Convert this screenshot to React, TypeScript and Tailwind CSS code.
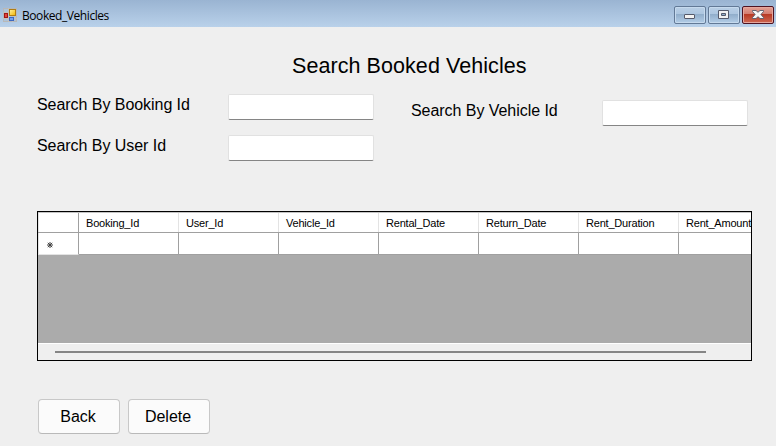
const columns = [
  'Booking_Id',
  'User_Id',
  'Vehicle_Id',
  'Rental_Date',
  'Return_Date',
  'Rent_Duration',
  'Rent_Amount',
];

function FormIcon() {
  return (
    <svg width="14" height="14" viewBox="0 0 14 14" shapeRendering="crispEdges">
      <defs>
        <linearGradient id="gold" x1="0" y1="0" x2="1" y2="1">
          <stop offset="0" stopColor="#fff3a0" />
          <stop offset="1" stopColor="#f0b400" />
        </linearGradient>
      </defs>
      <path d="M0.5 0.5h13v13H0.5z" fill="#aec3d8" stroke="#b8b8b8" />
      <path d="M5.500 0v14M9.500 8v6M0 4.500h5M0 10.500h14" stroke="#c4c0ba" fill="none" />
      <rect x="6.5" y="1.5" width="6" height="6" fill="url(#gold)" stroke="#b07d10" />
      <rect x="1.5" y="5.5" width="3" height="4" fill="#e0443a" stroke="#a01515" />
      <rect x="6.5" y="9.5" width="4" height="3" fill="#6ea0f0" stroke="#3d68c0" />
    </svg>
  );
}

function CaptionButton({ kind }: { kind: 'minimize' | 'maximize' | 'close' }) {
  const tone =
    kind === 'close'
      ? 'border-[#4e1322] bg-[linear-gradient(#e3a297_0%,#d37c70_44%,#b83a25_46%,#cf6852_100%)] shadow-[inset_0_0_0_1px_#e6a79d]'
      : 'border-[#627996] bg-[linear-gradient(#b9cfe6_0%,#adc6e0_44%,#91aecb_46%,#b3cde7_100%)] shadow-[inset_0_0_0_1px_#c6daee]';
  return (
    <button className={`flex h-[18px] w-8 items-center justify-center rounded-xs border ${tone}`}>
      <svg width="30" height="16" viewBox="0 0 30 16">
        {kind === 'minimize' && (
          <rect x="9.5" y="7.5" width="10" height="4" rx="0.5" fill="#f3f3f3" stroke="#555a6b" />
        )}
        {kind === 'maximize' && (
          <path d="M9.5 3.5h10v8h-10zM12.500 6.500v2h4v-2z" fillRule="evenodd" fill="#f3f3f3" stroke="#555a6b" />
        )}
        {kind === 'close' && (
          <path
            d="M9.500 3.500h3.500l2 1.800 2-1.800h3.500v1L17.900 7.500l2.600 3v1h-3.500l-2-1.800-2 1.800H9.500v-1l2.600-3L9.500 4.500z"
            fill="#f6f6f6"
            stroke="#555a6b"
            strokeWidth="0.9"
          />
        )}
      </svg>
    </button>
  );
}

function Field() {
  return (
    <input
      type="text"
      className="h-[26px] w-[146px] rounded-xs border border-[#e1e1e1] border-b-[#858585] bg-white px-1 outline-none"
    />
  );
}

function ActionButton({ label }: { label: string }) {
  return (
    <button className="h-[35px] w-[82px] rounded border border-[#c8c8c8] border-b-[#b9b9b9] bg-[#fbfbfb] pr-0.5 text-base">
      {label}
    </button>
  );
}

export default function App() {
  return (
    <div className="flex h-[446px] w-[776px] flex-col overflow-hidden bg-[#efefef] font-['Liberation_Sans',Arial,sans-serif] text-base text-black">
      <header className="flex h-[27px] shrink-0 items-start bg-linear-to-b from-[#9ab4d2] to-[#b9d1ea] pr-0.5 pl-[3px]">
        <div className="pt-2">
          <FormIcon />
        </div>
        <span className="ml-[5px] pt-2 font-['Open_Sans','Noto_Sans',sans-serif] text-[12px] leading-4 tracking-[-0.43px] whitespace-nowrap">
          Booked_Vehicles
        </span>
        <div className="ml-auto flex gap-0.5 pt-1.5">
          <CaptionButton kind="minimize" />
          <CaptionButton kind="maximize" />
          <CaptionButton kind="close" />
        </div>
      </header>

      <main className="flex flex-col pr-6 pl-[37px]">
        <h1 className="mt-[27px] h-6 pl-[255px] text-[21.5px] leading-6 tracking-[0.07px] whitespace-nowrap">
          Search Booked Vehicles
        </h1>

        <section className="mt-4 flex h-[67px] tracking-[-0.05px]">
          <div className="grid w-[374px] grid-cols-[191px_146px] grid-rows-[26px_26px] content-start gap-y-[15px]">
            <label className="leading-[22px]">Search By Booking Id</label>
            <Field />
            <label className="leading-[22px]">Search By User Id</label>
            <Field />
          </div>
          <div className="flex items-start pt-1.5">
            <label className="w-[191px] leading-[22px]">Search By Vehicle Id</label>
            <Field />
          </div>
        </section>

        <section className="mt-[50px] flex h-[150px] w-[715px] flex-col overflow-hidden border border-black bg-[#ababab]">
          <div className="flex h-[21px] w-[741px] shrink-0 border-t border-b border-t-[#c4c4c4] border-b-[#a0a0a0] bg-white text-[11px] leading-5">
            <div className="w-[41px] border-r border-l border-r-[#a0a0a0] border-l-[#e3e3e3]" />
            {columns.map((name) => (
              <div key={name} className="w-[100px] border-r border-[#e3e3e3] pl-[7px] tracking-[-0.2px]">
                {name}
              </div>
            ))}
          </div>
          <div className="flex h-[22px] w-[741px] shrink-0 bg-white">
            <div className="flex w-[41px] items-center border-r border-b border-l border-r-[#a0a0a0] border-b-[#e3e3e3] border-l-[#e3e3e3] pt-0.5 pl-[7px]">
              <svg width="8" height="8" viewBox="0 0 8 8">
                <path d="M4 1v6M1 4h6M1.800 1.800l4.400 4.400M6.200 1.800L1.800 6.200" stroke="#404040" strokeWidth="1" />
              </svg>
            </div>
            {columns.map((name) => (
              <div key={name} className="w-[100px] border-r border-b border-[#a0a0a0]" />
            ))}
          </div>
          <div className="mt-auto h-[17px] shrink-0 border-t border-white bg-[#efefef] pt-[7px] pl-[17px]">
            <div className="h-0.5 w-[651px] bg-[#858585]" />
          </div>
        </section>

        <footer className="mt-[38px] flex gap-2 pl-px">
          <ActionButton label="Back" />
          <ActionButton label="Delete" />
        </footer>
      </main>
    </div>
  );
}
